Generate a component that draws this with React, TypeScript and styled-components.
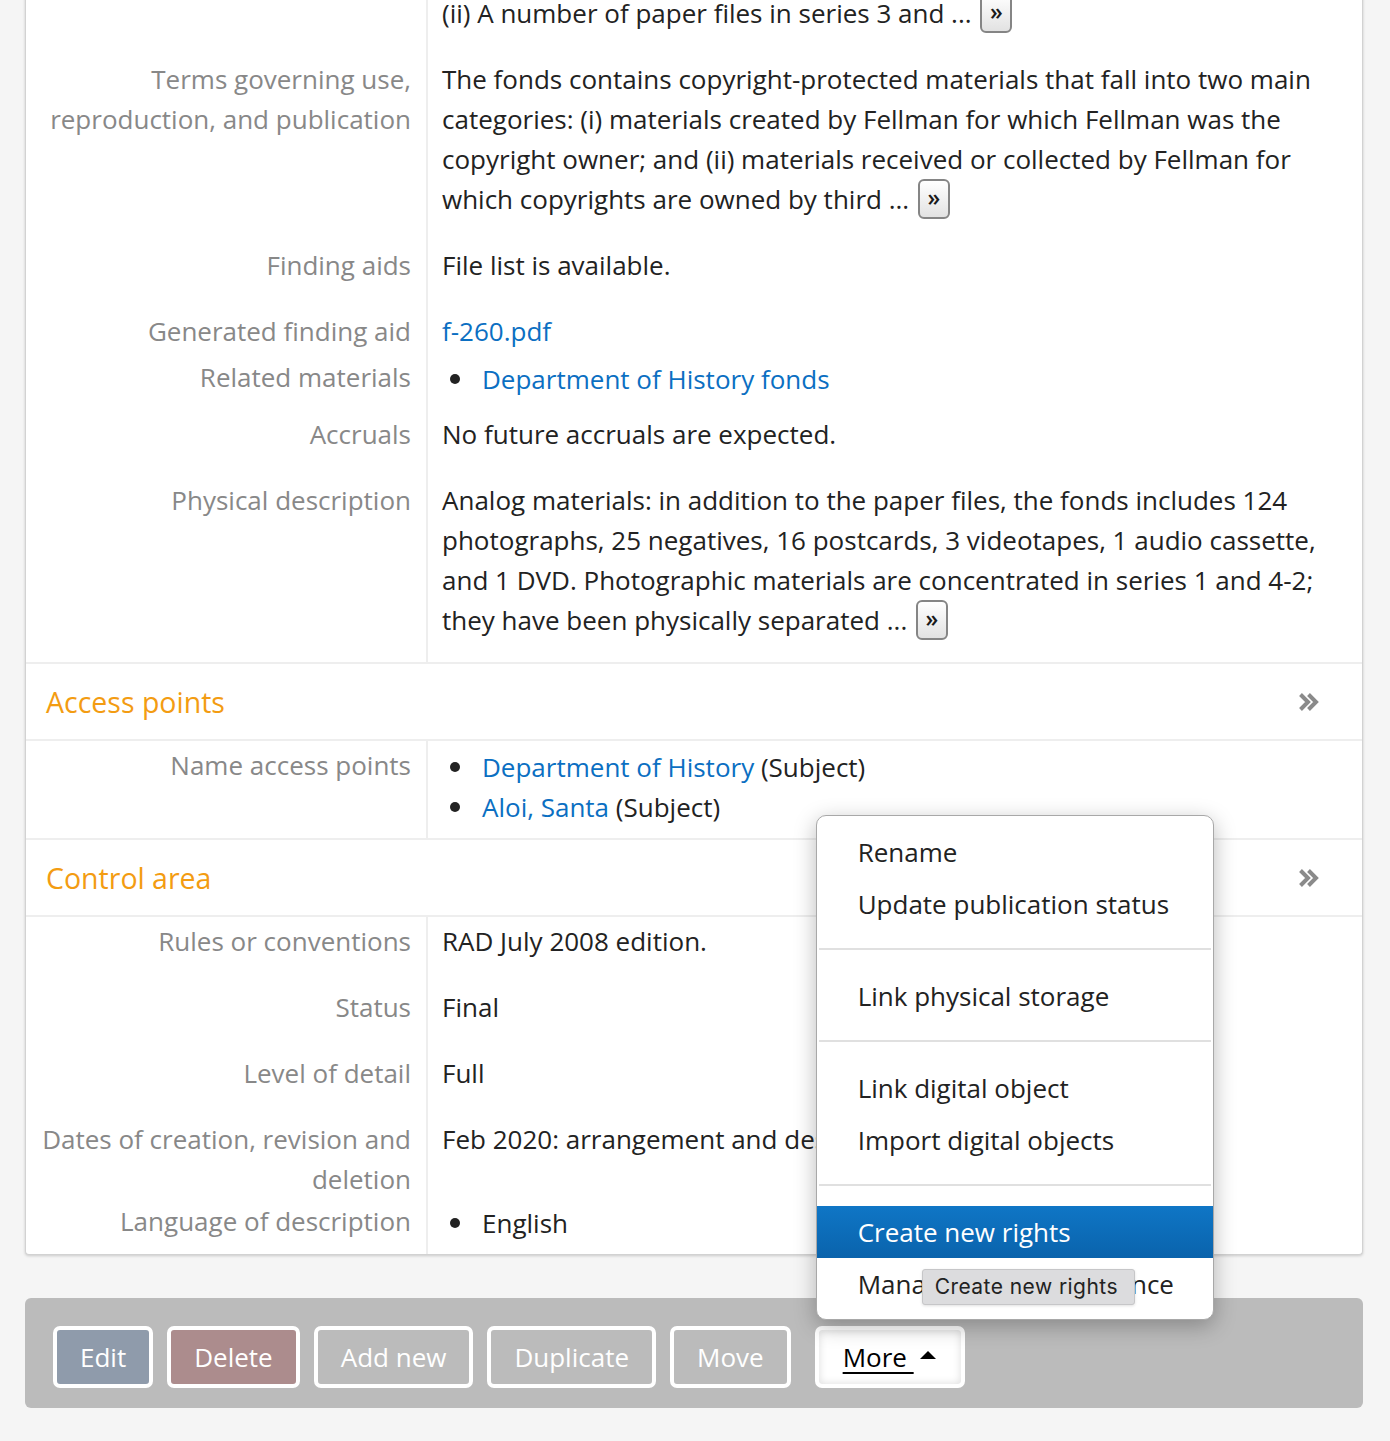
import React from "react";
import styled, { createGlobalStyle } from "styled-components";

const Global = createGlobalStyle`
  html, body { margin: 0; padding: 0; background: #f5f5f5; }
  body {
    font-family: "Open Sans", "DejaVu Sans", sans-serif;
    font-size: 26px;
    line-height: 40px;
    color: #222;
    overflow: hidden;
  }
  * { box-sizing: border-box; }
`;

const Page = styled.div`
  padding: 0 27px 0 25px;
  height: 1441px;
`;

const Card = styled.section`
  margin-top: -11px;
  background: #fff;
  border: 1px solid #d2d2d2;
  border-top: none;
  border-radius: 0 0 4px 4px;
  box-shadow: 0 1px 3px rgba(0, 0, 0, 0.18);
`;

const Field = styled.div`
  display: grid;
  grid-template-columns: 400px 1fr;
  align-items: start;
`;

const Label = styled.div`
  text-align: right;
  color: #888;
  padding: 4px 15px 0 0;
  margin-bottom: -2px;
`;

const Value = styled.div`
  align-self: stretch;
  padding: 4px 15px 2px 14px;
  border-left: 2px solid #eee;
`;

const Para = styled.p<{ $flush?: boolean }>`
  margin: 0 0 ${(p) => (p.$flush ? 0 : 20)}px;
`;

const List = styled.ul`
  margin: 2px 0 9px;
  padding-left: 40px;
  list-style: none;
`;

const Item = styled.li`
  position: relative;
  &::before {
    content: "";
    position: absolute;
    left: -32px;
    top: 15px;
    width: 10px;
    height: 10px;
    border-radius: 50%;
    background: #222;
  }
`;

const Link = styled.a`
  color: #0b6fc2;
  text-decoration: none;
`;

const ExpandButton = styled.button`
  display: inline-flex;
  align-items: center;
  justify-content: center;
  width: 32px;
  height: 40px;
  margin-left: 2px;
  padding: 0 0 3px;
  vertical-align: top;
  border: 2px solid #858585;
  border-radius: 6px;
  background: linear-gradient(#ffffff, #e2e2e2);
  font: 600 23px/1 "Open Sans", sans-serif;
  color: #1a1a1a;
`;

const SectionHead = styled.div`
  display: flex;
  align-items: center;
  justify-content: space-between;
  padding: 18px 42px 17px 20px;
  border-top: 2px solid #eee;
  border-bottom: 2px solid #eee;
  color: #f39c12;
  font-size: 28.5px;
`;

const ActionBar = styled.div`
  margin-top: 43px;
  background: #bbb;
  border-radius: 6px;
  padding: 28px 28px 20px;
  display: flex;
  gap: 14px;
`;

const ActionButton = styled.button<{ $tone?: "edit" | "delete" }>`
  height: 62px;
  border: 4px solid #fff;
  border-radius: 7px;
  padding: 0 23px;
  background: ${(p) =>
    p.$tone === "edit" ? "#8f9bab" : p.$tone === "delete" ? "#ac8c8d" : "#bbb"};
  color: #fff;
  font: 26px/40px "Open Sans", sans-serif;
`;

const MoreWrap = styled.div`
  position: relative;
  margin-left: 10px;
`;

const MoreButton = styled.button`
  display: flex;
  align-items: center;
  width: 150px;
  height: 62px;
  border: 4px solid #fff;
  border-radius: 7px;
  padding: 0 0 0 24px;
  background: #fff;
  box-shadow: inset 0 0 8px rgba(0, 0, 0, 0.14);
  color: #000;
  font: 26px/40px "Open Sans", sans-serif;
`;

const Underlined = styled.span`
  text-decoration: underline;
  text-underline-offset: 5px;
  text-decoration-thickness: 2px;
  white-space: pre;
`;

const Caret = styled.span`
  display: inline-block;
  margin-left: 6px;
  margin-bottom: 4px;
  width: 0;
  height: 0;
  border-left: 8px solid transparent;
  border-right: 8px solid transparent;
  border-bottom: 8px solid #000;
`;

const Menu = styled.ul`
  position: absolute;
  left: 1px;
  bottom: calc(100% + 6px);
  width: 398px;
  margin: 0;
  padding: 10px 0 9px;
  list-style: none;
  background: #fff;
  border: 1px solid #a8a8a8;
  border-radius: 10px;
  box-shadow: 0 6px 22px rgba(0, 0, 0, 0.28);
  z-index: 10;
`;

const MenuItem = styled.li<{ $active?: boolean }>`
  position: relative;
  padding: 6px 41px;
  white-space: nowrap;
  color: ${(p) => (p.$active ? "#fff" : "#222")};
  background: ${(p) =>
    p.$active ? "linear-gradient(#0f76c6, #0a63ac)" : "transparent"};
`;

const MenuDivider = styled.li`
  height: 2px;
  margin: 18px 2px 20px;
  background: #e0e0e0;
`;

const Tooltip = styled.div`
  position: absolute;
  left: 105px;
  top: 11px;
  height: 36px;
  padding: 0 16px 0 12px;
  background: #dcdcde;
  border: 1px solid #c6c6c8;
  border-radius: 3px;
  box-shadow: 0 1px 3px rgba(0, 0, 0, 0.12);
  font: 21px/34px Inter, "Liberation Sans", sans-serif;
  letter-spacing: 0.45px;
  color: #222;
  white-space: nowrap;
`;

const Chevrons = () => (
  <svg width="22" height="20" viewBox="0 0 22 20" aria-hidden="true">
    <path
      d="M2.5 2.5l7.5 7.5-7.5 7.5M10.5 2.5l7.5 7.5-7.5 7.5"
      fill="none"
      stroke="#8a8a8a"
      strokeWidth="4"
    />
  </svg>
);

export default function App() {
  return (
    <Page>
      <Global />
      <Card>
        <Field>
          <Label />
          <Value>
            <Para>
              (ii) A number of paper files in series 3 and ...{" "}
              <ExpandButton>»</ExpandButton>
            </Para>
          </Value>
        </Field>
        <Field>
          <Label>Terms governing use, reproduction, and publication</Label>
          <Value>
            <Para>
              The fonds contains copyright-protected materials that fall into two main
              categories: (i) materials created by Fellman for which Fellman was the
              copyright owner; and (ii) materials received or collected by Fellman for
              which copyrights are owned by third ...{" "}
              <ExpandButton>»</ExpandButton>
            </Para>
          </Value>
        </Field>
        <Field>
          <Label>Finding aids</Label>
          <Value>
            <Para>File list is available.</Para>
          </Value>
        </Field>
        <Field>
          <Label>Generated finding aid</Label>
          <Value>
            <Para $flush>
              <Link href="#">f-260.pdf</Link>
            </Para>
          </Value>
        </Field>
        <Field>
          <Label>Related materials</Label>
          <Value>
            <List>
              <Item>
                <Link href="#">Department of History fonds</Link>
              </Item>
            </List>
          </Value>
        </Field>
        <Field>
          <Label>Accruals</Label>
          <Value>
            <Para>No future accruals are expected.</Para>
          </Value>
        </Field>
        <Field>
          <Label>Physical description</Label>
          <Value>
            <Para>
              Analog materials: in addition to the paper files, the fonds includes 124
              photographs, 25 negatives, 16 postcards, 3 videotapes, 1 audio cassette,
              and 1 DVD. Photographic materials are concentrated in series 1 and 4-2;
              they have been physically separated ...{" "}
              <ExpandButton>»</ExpandButton>
            </Para>
          </Value>
        </Field>

        <SectionHead>
          <span>Access points</span>
          <Chevrons />
        </SectionHead>
        <Field>
          <Label>Name access points</Label>
          <Value>
            <List>
              <Item>
                <Link href="#">Department of History</Link> (Subject)
              </Item>
              <Item>
                <Link href="#">Aloi, Santa</Link> (Subject)
              </Item>
            </List>
          </Value>
        </Field>

        <SectionHead>
          <span>Control area</span>
          <Chevrons />
        </SectionHead>
        <Field>
          <Label>Rules or conventions</Label>
          <Value>
            <Para>RAD July 2008 edition.</Para>
          </Value>
        </Field>
        <Field>
          <Label>Status</Label>
          <Value>
            <Para>Final</Para>
          </Value>
        </Field>
        <Field>
          <Label>Level of detail</Label>
          <Value>
            <Para>Full</Para>
          </Value>
        </Field>
        <Field>
          <Label>Dates of creation, revision and deletion</Label>
          <Value>
            <Para>Feb 2020: arrangement and description.</Para>
          </Value>
        </Field>
        <Field>
          <Label>Language of description</Label>
          <Value>
            <List>
              <Item>English</Item>
            </List>
          </Value>
        </Field>
      </Card>

      <ActionBar>
        <ActionButton $tone="edit">Edit</ActionButton>
        <ActionButton $tone="delete">Delete</ActionButton>
        <ActionButton>Add new</ActionButton>
        <ActionButton>Duplicate</ActionButton>
        <ActionButton>Move</ActionButton>
        <MoreWrap>
          <Menu>
            <MenuItem>Rename</MenuItem>
            <MenuItem>Update publication status</MenuItem>
            <MenuDivider />
            <MenuItem>Link physical storage</MenuItem>
            <MenuDivider />
            <MenuItem>Link digital object</MenuItem>
            <MenuItem>Import digital objects</MenuItem>
            <MenuDivider />
            <MenuItem $active>Create new rights</MenuItem>
            <MenuItem>
              Manage rights inheritance
              <Tooltip>Create new rights</Tooltip>
            </MenuItem>
          </Menu>
          <MoreButton>
            <Underlined>More </Underlined>
            <Caret />
          </MoreButton>
        </MoreWrap>
      </ActionBar>
    </Page>
  );
}
